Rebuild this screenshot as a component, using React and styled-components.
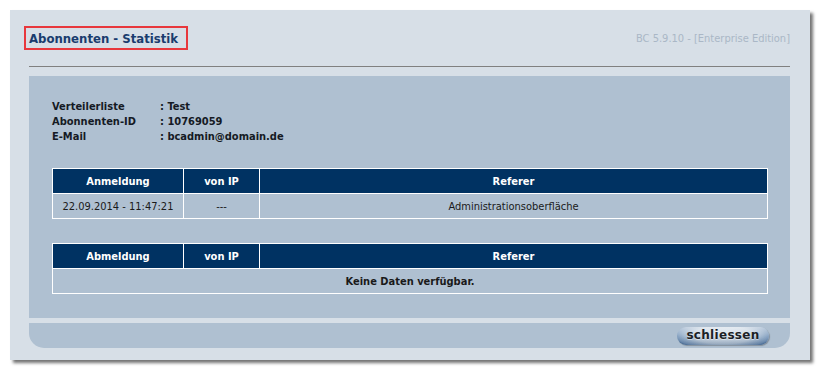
import React from 'react';
import styled, { createGlobalStyle } from 'styled-components';

const GlobalStyle = createGlobalStyle`
  html, body {
    margin: 0;
    padding: 0;
    background: #ffffff;
  }
  body {
    font-family: Tahoma, "DejaVu Sans Condensed", "DejaVu Sans", sans-serif;
    font-size: 11px;
  }
`;

const Page = styled.div`
  padding: 10px 11px 11px 10px;
`;

const Window = styled.div`
  width: 800px;
  height: 350px;
  box-sizing: border-box;
  background: #d7dfe7;
  box-shadow: 3px 3px 3px rgba(0, 0, 0, 0.55);
  padding: 16px 20px 12px 19px;
  display: flex;
  flex-direction: column;
`;

const Header = styled.div`
  display: flex;
  align-items: center;
  justify-content: space-between;
  height: 24px;
`;

const Title = styled.h1`
  margin: 0 0 0 -5px;
  padding: 0 8px 0 3px;
  height: 24px;
  box-sizing: border-box;
  border: 2px solid #e8383d;
  display: flex;
  align-items: center;
  font-size: 13px;
  font-weight: bold;
  color: #1a3c6e;
`;

const Version = styled.span`
  color: #aab7c6;
  font-size: 11px;
  margin-top: 1px;
`;

const Rule = styled.hr`
  margin: 16px 0 9px;
  border: 0;
  border-top: 1px solid #808080;
  height: 0;
`;

const Content = styled.div`
  background: #afc0d1;
  padding: 23px 22px 24px 23px;
  display: flex;
  flex-direction: column;
  gap: 24px;
`;

const InfoGrid = styled.div`
  display: grid;
  grid-template-columns: 108px auto;
  line-height: 15px;
  font-weight: bold;
  color: #151a24;
`;

const Table = styled.table`
  width: 100%;
  border-collapse: collapse;
  border: 1px solid #ffffff;
  table-layout: fixed;
`;

const HeadCell = styled.th`
  background: #003262;
  color: #ffffff;
  font-weight: bold;
  height: 24px;
  padding: 0;
  border: 1px solid #ffffff;
  text-align: center;
  width: ${(p) => p.$w || 'auto'};
`;

const Cell = styled.td`
  height: 24px;
  padding: 0;
  border: 1px solid #ffffff;
  text-align: center;
  color: #1a1a1a;
  font-weight: ${(p) => (p.$bold ? 'bold' : 'normal')};
`;

const Footer = styled.div`
  margin-top: 5px;
  height: 26px;
  background: #afc0d1;
  border-radius: 0 0 15px 15px;
  display: flex;
  align-items: center;
  justify-content: flex-end;
  padding-right: 21px;
`;

const CloseButton = styled.button`
  height: 18px;
  width: 92px;
  border: 0;
  border-radius: 9px;
  padding: 0 0 1px;
  font-family: "DejaVu Sans", Verdana, sans-serif;
  font-size: 12px;
  font-weight: bold;
  letter-spacing: 0.3px;
  color: #1c1f26;
  text-shadow: 0 1px 0 rgba(255, 255, 255, 0.45);
  background:
    linear-gradient(to bottom, rgba(255, 255, 255, 0.55) 0%, rgba(255, 255, 255, 0.1) 45%, rgba(0, 0, 0, 0) 55%, rgba(10, 40, 80, 0.25) 100%),
    radial-gradient(ellipse 60% 90% at 50% 45%, #dde6ef 0%, #c3d1df 55%, #7d9bbd 85%, #2f5888 100%);
  box-shadow: 1px 1px 1px rgba(0, 0, 0, 0.25);
  cursor: pointer;
`;

const info = [
  ['Verteilerliste', 'Test'],
  ['Abonnenten-ID', '10769059'],
  ['E-Mail', 'bcadmin@domain.de'],
];

export default function App() {
  return (
    <Page>
      <GlobalStyle />
      <Window>
        <Header>
          <Title>Abonnenten - Statistik</Title>
          <Version>BC 5.9.10 - [Enterprise Edition]</Version>
        </Header>
        <Rule />
        <Content>
          <InfoGrid>
            {info.map(([label, value]) => (
              <React.Fragment key={label}>
                <span>{label}</span>
                <span>: {value}</span>
              </React.Fragment>
            ))}
          </InfoGrid>
          <Table>
            <thead>
              <tr>
                <HeadCell $w="130px">Anmeldung</HeadCell>
                <HeadCell $w="75px">von IP</HeadCell>
                <HeadCell>Referer</HeadCell>
              </tr>
            </thead>
            <tbody>
              <tr>
                <Cell>22.09.2014 - 11:47:21</Cell>
                <Cell>---</Cell>
                <Cell>Administrationsoberfläche</Cell>
              </tr>
            </tbody>
          </Table>
          <Table>
            <thead>
              <tr>
                <HeadCell $w="130px">Abmeldung</HeadCell>
                <HeadCell $w="75px">von IP</HeadCell>
                <HeadCell>Referer</HeadCell>
              </tr>
            </thead>
            <tbody>
              <tr>
                <Cell colSpan={3} $bold>Keine Daten verfügbar.</Cell>
              </tr>
            </tbody>
          </Table>
        </Content>
        <Footer>
          <CloseButton>schliessen</CloseButton>
        </Footer>
      </Window>
    </Page>
  );
}
